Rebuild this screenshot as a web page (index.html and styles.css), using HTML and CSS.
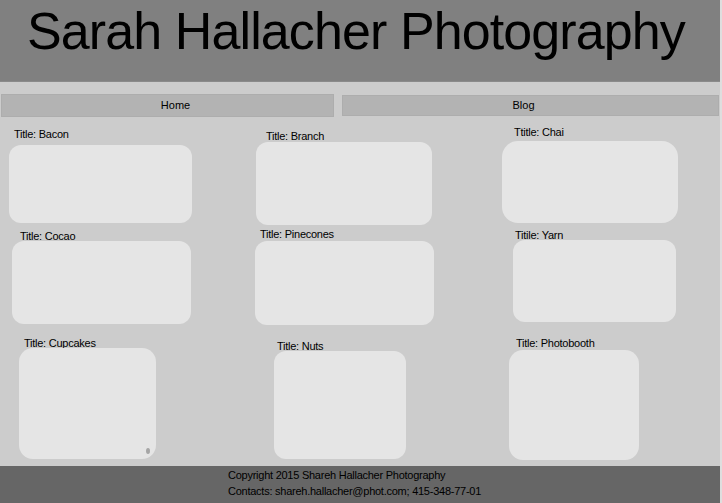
FILE: index.html
```html
<!DOCTYPE html>
<html>

<head>
  <title>Sarah Hallacher Photography</title>

  <link rel="stylesheet" href="styles.css">
</head>

<body>
  <header class="site-header">
    <h1>Sarah Hallacher Photography</h1>
  </header>

  <nav class="site-nav">
    <a class="nav-link nav-link--home" href="#">Home</a>
    <a class="nav-link nav-link--blog" href="#">Blog</a>
  </nav>

  <main class="gallery">
    <!-- Row 1 -->
    <div class="card card--bacon">
      <p class="card-title">Title: Bacon</p>
      <div class="card-photo"></div>
    </div>
    <div class="card card--branch">
      <p class="card-title">Title: Branch</p>
      <div class="card-photo"></div>
    </div>
    <div class="card card--chai">
      <p class="card-title">Ttitle: Chai</p>
      <div class="card-photo"></div>
    </div>

    <!-- Row 2 -->
    <div class="card card--cocao">
      <p class="card-title">Title: Cocao</p>
      <div class="card-photo"></div>
    </div>
    <div class="card card--pinecones">
      <p class="card-title">Title: Pinecones</p>
      <div class="card-photo"></div>
    </div>
    <div class="card card--yarn">
      <p class="card-title">Titile: Yarn</p>
      <div class="card-photo"></div>
    </div>

    <!-- Row 3 -->
    <div class="card card--cupcakes">
      <p class="card-title">Title: Cupcakes</p>
      <div class="card-photo"><span class="resize-dot"></span></div>
    </div>
    <div class="card card--nuts">
      <p class="card-title">Title: Nuts</p>
      <div class="card-photo"></div>
    </div>
    <div class="card card--photobooth">
      <p class="card-title">Title: Photobooth</p>
      <div class="card-photo"></div>
    </div>
  </main>

  <footer class="site-footer">
    <p>Copyright 2015 Shareh Hallacher Photography</p>
    <p>Contacts: shareh.hallacher@phot.com; 415-348-77-01</p>
  </footer>
</body>

</html>
```

FILE: styles.css
```css
* {
  margin: 0;
  padding: 0;
  box-sizing: border-box;
}

:root {
  --header: #808080;
  --page: #cccccc;
  --nav: #b3b3b3;
  --photo: #e5e5e5;
  --footer: #666666;
  --text: #000000;
}

html {
  background-color: #dedede;
}

body {
  width: 720px;
  font-family: 'Liberation Sans', Arial, sans-serif;
  font-size: 11px;
  color: var(--text);
  background-color: var(--page);
}

.site-header {
  height: 82px;
  background-color: var(--header);
  border-bottom: 1px solid #8a8a8a;
}

.site-header h1 {
  padding-left: 27px;
  font-size: 52px;
  font-weight: 400;
  line-height: 63px;
  letter-spacing: -0.9px;
  color: #000;
}

.site-nav {
  display: flex;
  align-items: flex-start;
  padding-top: 12px;
}

.nav-link {
  display: block;
  text-align: center;
  text-decoration: none;
  color: var(--text);
  background-color: var(--nav);
  border: 1px solid #adadad;
}

.nav-link--home {
  width: 333px;
  height: 23px;
  line-height: 21px;
  margin-left: 1px;
  padding-left: 16px;
}

.nav-link--blog {
  width: 377px;
  height: 21px;
  line-height: 19px;
  margin-top: 1px;
  margin-left: 8px;
  padding-right: 14px;
}

.gallery {
  display: grid;
  grid-template-columns: 250px 250px 1fr;
  grid-template-rows: 103px 108px 131px;
  padding-top: 7px;
}

.card-title {
  line-height: 10px;
  letter-spacing: -0.25px;
  white-space: nowrap;
}

.card-photo {
  position: relative;
  background-color: var(--photo);
  border-radius: 12px;
}

.card--bacon .card-title { margin-top: 5px; padding-left: 14px; }
.card--bacon .card-photo { margin: 6px 0 0 9px; width: 183px; height: 78px; }

.card--branch .card-title { margin-top: 7px; padding-left: 16px; }
.card--branch .card-photo { margin: 1px 0 0 6px; width: 176px; height: 83px; }

.card--chai .card-title { margin-top: 3px; padding-left: 14px; }
.card--chai .card-photo { margin: 4px 0 0 2px; width: 176px; height: 82px; border-radius: 16px; }

.card--cocao .card-title { margin-top: 4px; padding-left: 20px; }
.card--cocao .card-photo { margin: 0 0 0 12px; width: 179px; height: 83px; }

.card--pinecones .card-title { margin-top: 2px; padding-left: 10px; }
.card--pinecones .card-photo { margin: 2px 0 0 5px; width: 179px; height: 84px; }

.card--yarn .card-title { margin-top: 3px; padding-left: 15px; }
.card--yarn .card-photo { margin: 0 0 0 13px; width: 163px; height: 82px; }

.card--cupcakes .card-title { margin-top: 3px; padding-left: 24px; }
.card--cupcakes .card-photo { margin: 0 0 0 19px; width: 137px; height: 111px; border-radius: 14px; }

.card--nuts .card-title { margin-top: 6px; padding-left: 27px; }
.card--nuts .card-photo { margin: 0 0 0 24px; width: 132px; height: 108px; }

.card--photobooth .card-title { margin-top: 3px; padding-left: 16px; }
.card--photobooth .card-photo { margin: 2px 0 0 9px; width: 130px; height: 110px; border-radius: 14px; }

.resize-dot {
  position: absolute;
  right: 6px;
  bottom: 5px;
  width: 4px;
  height: 6px;
  border-radius: 50%;
  background-color: #a6a6a6;
}

.site-footer {
  height: 37px;
  padding: 1px 0 0 228px;
  background-color: var(--footer);
  line-height: 16px;
  letter-spacing: -0.25px;
}
```
